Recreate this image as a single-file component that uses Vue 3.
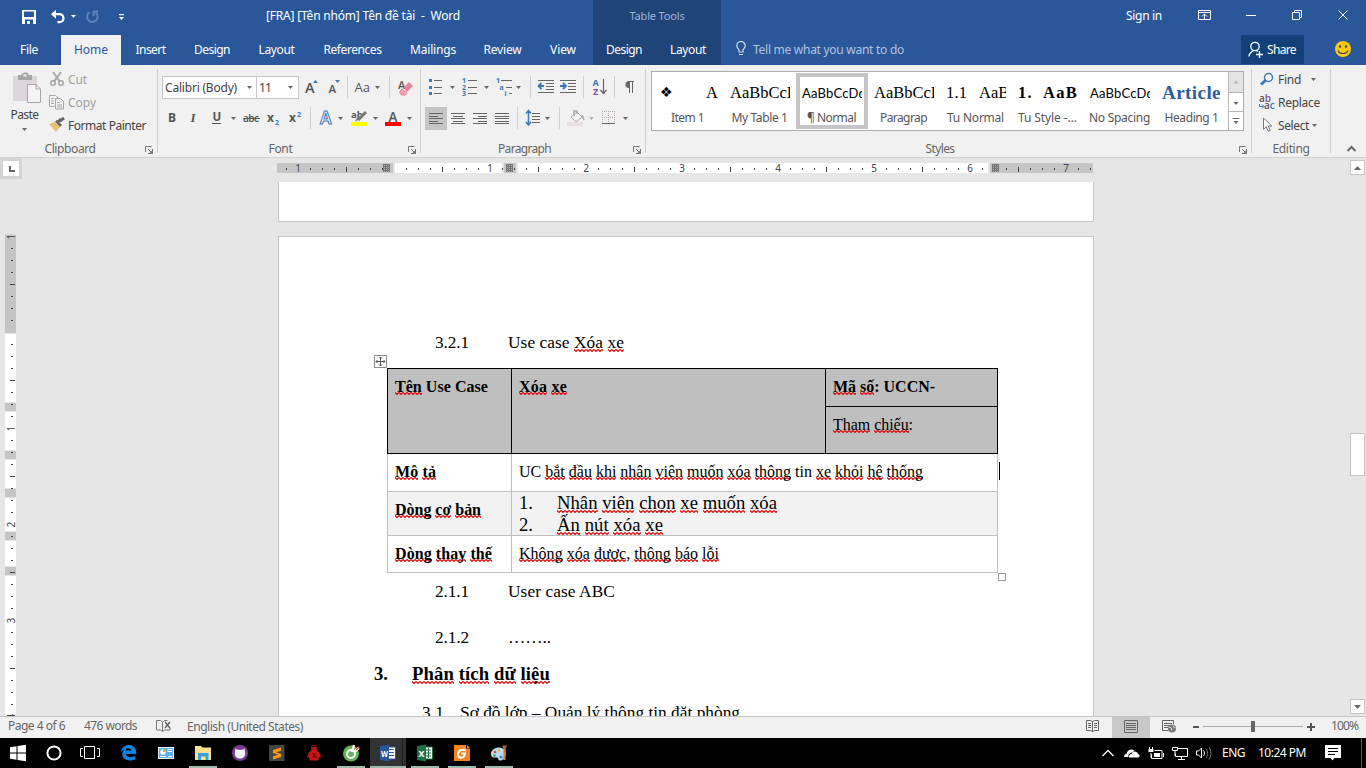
<script setup>
import { h } from 'vue'

// Icon canvas: the viewBox starts at (x, y) so neighbouring icons share one coordinate space.
const Ico = (p, { slots }) =>
  h('svg', { class: 'ico', viewBox: `${p.x} ${p.y} ${p.w} ${p.h}`, width: p.w, height: p.h }, slots.default?.())
Ico.props = ['x', 'y', 'w', 'h']

// Small drop-down arrow
const Tri = (p) => h('path', { d: `M${p.x} ${p.y}h5l-2.5 3z`, fill: p.c || '#666' })
Tri.props = ['x', 'y', 'c']

// Words prefixed with ~ get the spelling underline
const Rich = (p) =>
  p.t.split(/(~[^\s:,]+)/).filter(Boolean).map((s) => (s[0] === '~' ? h('span', { class: 'misspelt' }, s.slice(1)) : s))
Rich.props = ['t']

// Tracks a text run to the requested width
const vFit = {
  mounted(el, { value }) {
    if (!value) return
    const r = document.createRange()
    r.selectNodeContents(el)
    const n = el.textContent.length
    el.style.letterSpacing = (value - r.getBoundingClientRect().width) / n + 'px'
  },
}

const docTitle = '[FRA] [Tên nhóm] Tên đề tài  -  Word'
const tabs = [
  ['File', 58, 18, 'file'], ['Home', 60, 34, 'on'], ['Insert', 59, 30], ['Design', 64, 36], ['Layout', 65, 36],
  ['References', 87, 58], ['Mailings', 74, 46], ['Review', 65, 38], ['View', 56, 26, 'last'], ['Design', 62, 36, 'dark'], ['Layout', 66, 36, 'dark'],
]
const styles = [
  { n: 'Item 1', w: 33, k: 'serif item', p: '❖', q: 'A' },
  { n: 'My Table 1', w: 56, k: 'serif', p: 'AaBbCcD' },
  { n: '¶ Normal', w: 49, k: 'sans', p: 'AaBbCcDd', pw: 64, on: true },
  { n: 'Paragrap', w: 47, k: 'serif', p: 'AaBbCcD' },
  { n: 'Tu Normal', w: 57, k: 'serif n1', p: '1.1', pw: 21, q: 'AaB' },
  { n: 'Tu Style -...', w: 59, k: 'serif bold n2', p: '1.', pw: 15, q: 'AaB', qw: 35 },
  { n: 'No Spacing', w: 61, k: 'sans', p: 'AaBbCcDd', pw: 64 },
  { n: 'Heading 1', w: 54, k: 'serif bold blue', p: 'Article', pw: 59 },
]
const hTicks = []
for (let k = -9; k <= 58; k++) hTicks.push({ x: 394.5 + 12 * k, k, n: Math.abs(k / 8) })
const vTicks = []
for (let k = -8; k <= 32; k++) vTicks.push({ y: 332.5 + 12 * k, k, n: Math.abs(k / 8) })
const gaps = [[403, 8], [451, 8], [489, 8], [532, 8], [567, 8]]
const isNum = (k) => k !== 0 && k % 8 === 0
const isTall = (k) => ((k % 8) + 8) % 8 === 4
const hatches = [383, 506, 992]
const aligns = [
  { x: 429, r: [[0, 14], [0, 9], [0, 14], [0, 9], [0, 14]] },
  { x: 451, r: [[0, 14], [2, 10], [0, 14], [2, 10], [0, 14]] },
  { x: 473, r: [[0, 14], [5, 9], [0, 14], [5, 9], [0, 14]] },
  { x: 495, r: [[0, 14], [0, 14], [0, 14], [0, 14], [0, 14]] },
]
const alignY = [113, 116, 118, 121, 123]
</script>

<template>
  <div class="app">
    <header class="title">
      <Ico x="0" y="0" w="140" h="35">
        <path d="M22 10h14v14h-14z M24 11.5v5.5h10v-5.5z M25 19.5v4.5h2v-3h3v3h3v-4.5z" fill="#fff" fill-rule="evenodd" />
        <path d="M53 14.2h6.5a4 4 0 0 1 0 8h-2" fill="none" stroke="#fff" stroke-width="2.2" />
        <path d="M51 14.2l5-4.5v9z" fill="#fff" />
        <Tri x="71" y="15" c="#fff" />
        <path d="M89.5 12.2a5.3 5.3 0 1 0 6 .2M93 11.5h5M93.5 11v5" fill="none" stroke="#5f82ba" stroke-width="2" />
        <path d="M119 14h5v1.2h-5z" fill="#fff" /><Tri x="119" y="17" c="#fff" />
      </Ico>
      <div class="name"><span v-fit="194">{{ docTitle }}</span></div>
      <div class="ctx dark"><span v-fit="55">Table Tools</span></div>
      <div class="grow"></div>
      <div class="signin"><span v-fit="36">Sign in</span></div>
      <Ico x="1176" y="0" w="190" h="35">
        <g fill="none" stroke="#fff">
          <path d="M1198.5 10.5h12v9h-12zM1198.5 12.5h12M1204.5 19v-5M1202 16.5l2.5-2.5 2.5 2.5" />
          <path d="M1246 15.5h10" />
          <path d="M1292.5 12.5h7v7h-7zM1294.5 12v-1.5h7v7h-2" />
          <path d="M1338.500 10.500l9 9M1347.500 10.500l-9 9" />
        </g>
      </Ico>
    </header>

    <nav class="tabs">
      <div v-for="(t, i) in tabs" :key="i" class="tab" :class="t[3]" :style="{ width: t[1] + 'px' }"><span v-fit="t[2]">{{ t[0] }}</span></div>
      <Ico x="721" y="35" w="32" h="30">
        <path d="M739 52v-1.800c0-1-2.200-2.200-2.200-4.500a4.200 4.200 0 0 1 8.400 0c0 2.300-2.200 3.500-2.200 4.500V52zM739 54.500h4" fill="none" stroke="#d4deee" stroke-width="1.200" />
      </Ico>
      <span v-fit="151" class="tell">Tell me what you want to do</span>
      <div class="grow"></div>
      <div class="share">
        <Ico x="1241" y="35" w="26" h="29">
          <g fill="none" stroke="#fff" stroke-width="1.300"><circle cx="1255" cy="46.500" r="4.200" /><path d="M1249 56.500c0-4 3-4.500 4.500-6M1256 50.500l2 1M1256 54.500h7M1259.500 51v7" /></g>
        </Ico>
        <span v-fit="29">Share</span>
      </div>
      <Ico x="1304" y="35" w="62" h="30">
        <circle cx="1343" cy="49" r="8" fill="#fbc910" /><circle cx="1340" cy="46.500" r="1.200" fill="#444" /><circle cx="1346" cy="46.500" r="1.200" fill="#444" />
        <path d="M1338 50.500c1.500 4 8.500 4 10 0" fill="none" stroke="#444" stroke-width="1.200" />
      </Ico>
    </nav>

    <section class="ribbon">
      <div class="group clip">
        <div class="body">
          <div class="paste">
            <Ico x="0" y="69" w="49" h="36">
              <path d="M13 76h24v25h-24z" fill="#dcd6dc" />
              <path d="M18 75h3.500v-1.500h2v-1h4v1h1v1.500h3.500v5h-14z" fill="#a6a6a6" /><path d="M23.500 74.500h3v2h-3z" fill="#f1f1f1" />
              <path d="M27.500 84.500h8.500l4.500 4.500v13.500h-13z" fill="#f6f3f7" stroke="#a8a5a8" /><path d="M36 84.500v4.500h4.500" fill="none" stroke="#a8a5a8" />
            </Ico>
            <span v-fit="28">Paste</span>
            <Ico x="0" y="124" w="49" h="10"><Tri x="22" y="128" /></Ico>
          </div>
          <div class="cmds">
            <div class="off">
              <Ico x="49" y="69" w="19" h="23"><g fill="none" stroke="#a6a6a6" stroke-width="1.500"><path d="M53 72l6.500 9M61 72l-6.500 9" stroke-width="2" /><circle cx="53" cy="83" r="2.300" /><circle cx="61" cy="83" r="2.300" /></g></Ico>
              <span v-fit="19">Cut</span>
            </div>
            <div class="off">
              <Ico x="49" y="92" w="19" h="23"><g fill="#f5f2f5" stroke="#a8a5a8"><path d="M49.500 95.500h6l2.500 2.500v8.500h-8.500z" /><path d="M55.500 98.500h5l3 3v7.500h-8z" /><path d="M51 98.500h3M51 101h3M51 103.500h3M57 102.500h3M57 105h5M57 107h5" /></g></Ico>
              <span v-fit="28">Copy</span>
            </div>
            <div>
              <Ico x="49" y="115" w="19" h="23"><path d="M49 124l6-2 5 5-4 5z" fill="#ecbf74" /><path d="M55 121.500l2-1.500 5 5-2 2z" fill="#666" /><path d="M58 122l3-3M60 121l4-3" stroke="#666" stroke-width="3" /></Ico>
              <span v-fit="78">Format Painter</span>
            </div>
          </div>
        </div>
        <footer><span class="lab"><b v-fit="51">Clipboard</b></span><Ico class="launch" x="0" y="0" w="8" h="8"><path d="M.5 6v-5.500h6" fill="none" stroke="#777" /><path d="M3 3l3 3M7.500 3v4.500h-4.500" fill="none" stroke="#777" /><path d="M7.500 4v4h-4z" fill="#777" /></Ico></footer>
      </div>

      <div class="group font">
        <div class="body col">
          <div class="row r1">
            <div class="combo face"><span v-fit="72">Calibri (Body)</span><Ico x="0" y="0" w="6" h="4"><Tri x="0" y="0" /></Ico></div>
            <div class="combo size"><span v-fit="12">11</span><Ico x="0" y="0" w="6" h="4"><Tri x="0" y="0" /></Ico></div>
            <Ico x="299" y="75" w="48" h="25">
              <text x="305" y="93" font-size="14.500" class="ib">A</text><path d="M313 83h5l-2.500-3z" fill="#3e78b5" />
              <text x="328.500" y="93" font-size="11.500" class="ib">A</text><path d="M335 80h5l-2.500 3z" fill="#3e78b5" />
            </Ico>
            <Ico x="347" y="75" w="42" h="25"><path d="M347.500 76v22" class="sep" /><text x="354.500" y="92" font-size="13" class="ib thin">Aa</text><Tri x="375" y="86" /></Ico>
            <Ico x="389" y="75" w="30" h="25">
              <path d="M389.500 76v22" class="sep" /><text x="398" y="89" font-size="11" class="ib">A</text>
              <path d="M404 87l5-5 4 4-6.500 6.500z" fill="#e8849a" /><path d="M402 88.500l5 5-2 1.500h-3.500l-2-2.500z" fill="#f0a0b0" stroke="#e8849a" />
            </Ico>
          </div>
          <div class="row r2">
            <Ico x="162" y="105" w="22" h="25"><text x="168" y="122" font-size="12" class="ib bb">B</text></Ico>
            <Ico x="184" y="105" w="22" h="25"><text x="190.500" y="122" font-size="13" class="it">I</text></Ico>
            <Ico x="206" y="105" w="34" h="25"><text x="212.500" y="121" font-size="11.500" class="ib bb">U</text><path d="M212 123.500h9" stroke="#555" /><Tri x="231" y="117" /></Ico>
            <Ico x="240" y="105" w="23" h="25"><text x="243" y="122" font-size="10" textLength="16" class="ib">abc</text><path d="M243 118.500h17" stroke="#555" /></Ico>
            <Ico x="263" y="105" w="23" h="25"><text x="267" y="122" font-size="12" class="ib bb">x</text><text x="275" y="125" font-size="7" class="bl">2</text></Ico>
            <Ico x="286" y="105" w="24" h="25"><text x="289" y="122" font-size="12" class="ib bb">x</text><text x="297" y="117" font-size="7" class="bl">2</text></Ico>
            <Ico x="310" y="105" w="38" h="25"><path d="M310.500 107v22" class="sep" /><text x="320" y="124" font-size="17" class="glow">A</text><Tri x="338" y="117" /></Ico>
            <Ico x="348" y="105" w="34" h="25"><text x="351" y="118" font-size="9.500" class="ib bb">ab</text><path d="M366 112l-8 8" stroke="#777" stroke-width="3" /><path d="M355 121.500l2-4 2.500 2z" fill="#777" /><path d="M351 122h16v4h-16z" fill="#ff0" /><Tri x="373" y="117" /></Ico>
            <Ico x="382" y="105" w="37" h="25"><text x="388.500" y="121.500" font-size="13.500" class="ib">A</text><path d="M385 122h16v4h-16z" fill="#f00" /><Tri x="407" y="117" /></Ico>
          </div>
        </div>
        <footer><span class="lab"><b v-fit="24">Font</b></span><Ico class="launch" x="0" y="0" w="8" h="8"><path d="M.5 6v-5.500h6" fill="none" stroke="#777" /><path d="M3 3l3 3M7.500 3v4.500h-4.500" fill="none" stroke="#777" /><path d="M7.500 4v4h-4z" fill="#777" /></Ico></footer>
      </div>

      <div class="group para">
        <div class="body col">
          <div class="row r1">
            <Ico x="421" y="75" w="39" h="25"><path d="M429 79h3v3h-3zM429 86h3v3h-3zM429 92h3v3h-3z" fill="#3e78b5" /><path d="M434 80.500h8M434 87.500h8M434 93.500h8" class="ln" /><Tri x="450" y="86" /></Ico>
            <Ico x="460" y="75" w="34" h="25"><text x="462" y="83" class="num">1</text><text x="462" y="89.500" class="num">2</text><text x="462" y="96" class="num">3</text><path d="M468 80.500h9M468 87.500h9M468 93.500h9" class="ln" /><Tri x="484" y="86" /></Ico>
            <Ico x="494" y="75" w="36" h="25"><text x="496" y="83" class="num">1</text><text x="499.500" y="90" class="num">a</text><text x="504.500" y="95.500" class="num">i</text><path d="M501 80.500h11M506 87.500h6M509 93.500h3" class="ln" /><Tri x="516" y="86" /></Ico>
            <Ico x="530" y="75" w="27" h="25"><path d="M530.500 76v22" class="sep" /><path d="M538 80.500h16M546 83.500h8M546 86.500h8M546 89.500h8M538 92.500h16" class="ln" /><path d="M539 86h5M541.500 83l-3 3 3 3" fill="none" stroke="#3e78b5" stroke-width="1.800" /></Ico>
            <Ico x="557" y="75" w="26" h="25"><path d="M560 80.500h16M568 83.500h8M568 86.500h8M568 89.500h8M560 92.500h16" class="ln" /><path d="M560 86h5M563 83l3 3-3 3" fill="none" stroke="#3e78b5" stroke-width="1.800" /></Ico>
            <Ico x="583" y="75" w="31" h="25"><path d="M583.500 76v22" class="sep" /><text x="592.500" y="86" font-size="9" class="bl">A</text><text x="593" y="94.500" font-size="9" class="pu">Z</text><path d="M603.500 79v14M600.500 90l3 3.500 3-3.500" fill="none" stroke="#666" stroke-width="1.200" /></Ico>
            <Ico x="614" y="75" w="28" h="25"><path d="M614.500 76v22" class="sep" /><path d="M634 81.500h-6M629.500 81v12M632.500 81v12" class="ln" /><path d="M629 81a3.500 3.500 0 0 0 0 7z" fill="#666" /></Ico>
          </div>
          <div class="row r2">
            <Ico x="421" y="105" w="95" h="25">
              <path d="M425 107h22v23h-22z" fill="#c5c5c5" />
              <template v-for="a in aligns" :key="a.x"><path v-for="(l, i) in a.r" :key="i" :d="`M${a.x + l[0]} ${alignY[i] + 0.5}h${l[1]}`" class="ln" /></template>
            </Ico>
            <Ico x="516" y="105" w="42" h="25"><path d="M517.500 107v22" class="sep" /><path d="M528.500 111v13M526 113.500l2.500-3 2.500 3M526 122l2.500 3 2.500-3" fill="none" stroke="#3e78b5" stroke-width="1.500" /><path d="M532 113.500h8M532 116.500h8M532 119.500h8M532 122.500h8" class="ln" /><Tri x="545" y="117" /></Ico>
            <Ico x="558" y="105" w="40" h="25"><path d="M559.500 107v22" class="sep" /><path d="M571 117l6-5 5 5-6 5z" fill="#f6f3f6" stroke="#aaa" /><path d="M574 116v-5h3v3M582 115l2 5" fill="none" stroke="#aaa" stroke-width="1.500" /><path d="M567 122h16v4h-16z" fill="#e7dfe5" /><Tri x="589" y="117" c="#b5b5b5" /></Ico>
            <Ico x="598" y="105" w="44" h="25"><g stroke="#b3a6b3" stroke-dasharray="1 1" fill="none"><path d="M602 111.500h13M602 117.500h13M602.500 111v12M608.500 111v12M614.500 111v12" /></g><path d="M602 123.500h13" stroke="#666" /><Tri x="623" y="117" /></Ico>
          </div>
        </div>
        <footer><span class="lab"><b v-fit="53">Paragraph</b></span><Ico class="launch" x="0" y="0" w="8" h="8"><path d="M.5 6v-5.500h6" fill="none" stroke="#777" /><path d="M3 3l3 3M7.500 3v4.500h-4.500" fill="none" stroke="#777" /><path d="M7.500 4v4h-4z" fill="#777" /></Ico></footer>
      </div>

      <div class="group sty">
        <div class="body">
          <div class="gallery">
            <div v-for="s in styles" :key="s.n" class="style" :class="{ on: s.on }">
              <div class="prev" :class="s.k"><span v-fit="s.pw" class="p">{{ s.p }}</span><span v-if="s.q" v-fit="s.qw" class="q">{{ s.q }}</span></div>
              <span v-fit="s.w" class="sn">{{ s.n }}</span>
            </div>
            <div class="gscroll">
              <Ico x="0" y="0" w="14" h="21"><path d="M0 0h14v20h-14z" fill="#e4e4e4" /><path d="M0 20.500h14" stroke="#b5b5b5" /><path d="M4.500 11.500h5l-2.500-3z" fill="#b5b5b5" /></Ico>
              <Ico x="0" y="0" w="14" h="19"><path d="M0 18.500h14" stroke="#b5b5b5" /><Tri x="4.500" y="9" /></Ico>
              <Ico x="0" y="0" w="14" h="18"><path d="M3.500 6.500h7" stroke="#666" /><Tri x="4.500" y="9" /></Ico>
            </div>
          </div>
        </div>
        <footer><span class="lab"><b v-fit="29">Styles</b></span><Ico class="launch" x="0" y="0" w="8" h="8"><path d="M.5 6v-5.500h6" fill="none" stroke="#777" /><path d="M3 3l3 3M7.500 3v4.500h-4.500" fill="none" stroke="#777" /><path d="M7.500 4v4h-4z" fill="#777" /></Ico></footer>
      </div>

      <div class="group edit">
        <div class="body">
          <div class="cmds">
            <div><Ico x="1252" y="69" w="26" h="23"><path d="M1266 80l-5 4.500" stroke="#3e78b5" stroke-width="3" /><circle cx="1268.500" cy="77.500" r="4" fill="#fff" stroke="#3e78b5" stroke-width="1.500" /></Ico><span v-fit="23">Find</span><Ico x="1301" y="69" w="20" h="23"><Tri x="1311" y="78" /></Ico></div>
            <div><Ico x="1252" y="92" w="26" h="23"><text x="1259" y="102" font-size="10" class="ib">a<tspan fill="#8347a3">b</tspan></text><text x="1264" y="109" font-size="10" class="ib">a<tspan fill="#3e78b5">c</tspan></text><path d="M1259.500 104v2.500h4M1262 104.500l2 2-2 2" fill="none" stroke="#3e78b5" /></Ico><span v-fit="42">Replace</span></div>
            <div><Ico x="1252" y="115" w="26" h="23"><path d="M1263.500 118v11.500l2.800-2.700 2 4.500 2-1-2-4.300h3.500z" fill="#fff" stroke="#777" /></Ico><span v-fit="31">Select</span><Ico x="1309" y="115" w="12" h="23"><Tri x="1312" y="124" /></Ico></div>
          </div>
        </div>
        <footer><span class="lab"><b v-fit="37">Editing</b></span></footer>
      </div>
      <Ico x="1331" y="65" w="35" h="92"><path d="M1347.500 151l4-4 4 4" fill="none" stroke="#666" stroke-width="2" /></Ico>
    </section>

    <main class="work">
      <aside class="vr">
        <Ico x="0" y="158" w="24" h="558">
          <path d="M0 158h22v21h-22z" fill="#d4d4d4" /><path d="M3 161h16v15h-16z" fill="#fff" /><path d="M9 166h2v4h4v2h-6z" fill="#666" />
          <path d="M5 234.500h11v98.500h-11z" fill="#c5c5c5" /><path d="M5 334h11v382h-11z" fill="#fff" />
          <g v-for="g in gaps" :key="g[0]"><path :d="`M5 ${g[0] - 1}h11v${g[1] + 2}h-11z`" fill="#e6e6e6" /><path :d="`M5 ${g[0]}h11v${g[1]}h-11z`" fill="#c5c5c5" /></g>
          <template v-for="t in vTicks" :key="t.k">
            <text v-if="isNum(t.k)" :transform="`translate(15 ${t.y + 3}) rotate(-90)`" class="rn">{{ t.n }}</text>
            <path v-else-if="t.k !== 0" :d="isTall(t.k) ? `M10 ${t.y}h5` : `M11 ${t.y}h2`" stroke="#444" />
          </template>
        </Ico>
      </aside>
      <div class="canvas">
        <Ico x="277" y="158" w="817" h="24">
          <path d="M277 163h116v10h-116zM504 163h12v10h-12zM990 163h103v10h-103z" fill="#c5c5c5" /><path d="M395 163h107v10h-107zM518 163h470v10h-470z" fill="#fff" />
          <template v-for="t in hTicks" :key="t.k">
            <text v-if="isNum(t.k)" :x="t.x - 0.500" y="172" text-anchor="middle" class="rn">{{ t.n }}</text>
            <path v-else-if="t.k !== 0" :d="isTall(t.k) ? `M${t.x} 167v5` : `M${t.x} 168v2`" stroke="#444" />
          </template>
          <g v-for="x in hatches" :key="x"><path :d="`M${x} 164h7v8h-7z`" fill="#aaa" /><path :d="`M${x} 164.500h7m-7 2h7m-7 2h7m-7 2h7M${x + 0.500} 164v8m2-8v8m2-8v8m2-8v8`" stroke="#777" /></g>
        </Ico>
        <div class="page first"></div>
        <div class="page second">
          <div class="ln1 h1"><span v-fit="34" class="no">3.2.1</span><span v-fit="116"><Rich t="Use case ~Xóa ~xe" /></span></div>
          <div class="tbl">
            <svg class="handle" viewBox="0 0 13 13" width="13" height="13"><path d="M.5 .5h12v12h-12z" fill="#fff" stroke="#8a8a8a" /><path d="M6.500 2v9M2 6.500h9M5 3.500l1.500-1.500 1.500 1.500M5 9.500l1.500 1.500 1.500-1.500M3.500 5l-1.500 1.500 1.500 1.500M9.500 5l1.500 1.500-1.500 1.500" fill="none" stroke="#555" /></svg>
            <div class="thead">
              <div class="c a"><span v-fit="93"><Rich t="~Tên Use Case" /></span></div>
              <div class="c a"><span v-fit="48"><Rich t="~Xóa ~xe" /></span></div>
              <div class="c"><span v-fit="102"><Rich t="~Mã ~số: UCCN-" /></span></div>
              <div class="c light"><span v-fit="80"><Rich t="~Tham ~chiếu:" /></span></div>
            </div>
            <div class="tr t1"><div class="c"><b v-fit="41"><Rich t="~Mô ~tả" /></b></div><div class="c"><span v-fit="404"><Rich t="UC ~bắt ~đầu ~khi ~nhân ~viên ~muốn ~xóa ~thông tin ~xe ~khỏi ~hệ ~thống" /></span></div><i class="caret"></i></div>
            <div class="tr t2"><div class="c"><b v-fit="86"><Rich t="~Dòng ~cơ ~bản" /></b></div>
              <div class="c list">
                <div><span class="ord">1.</span><span v-fit="220"><Rich t="~Nhân ~viên ~chọn ~xe ~muốn ~xóa" /></span></div>
                <div><span class="ord">2.</span><span v-fit="106"><Rich t="~Ấn ~nút ~xóa ~xe" /></span></div>
              </div></div>
            <div class="tr t3"><div class="c"><b v-fit="97"><Rich t="~Dòng ~thay ~thế" /></b></div><div class="c"><span v-fit="200"><Rich t="~Không ~xóa ~được, ~thông ~báo ~lỗi" /></span></div></div>
            <i class="grip"></i>
          </div>
          <div class="ln1 h2"><span v-fit="34" class="no">2.1.1</span><span v-fit="107">User case ABC</span></div>
          <div class="ln1 h3"><span v-fit="34" class="no">2.1.2</span><span v-fit="43">……..</span></div>
          <div class="ln1 h4"><span v-fit="14" class="no">3.</span><span v-fit="138"><Rich t="~Phân ~tích ~dữ ~liệu" /></span></div>
          <div class="ln1 h5"><span v-fit="22" class="no">3.1</span><span v-fit="280">Sơ đồ lớp – Quản lý thông tin đặt phòng</span></div>
        </div>
      </div>
      <Ico class="vs" x="1342" y="158" w="24" h="558">
        <g fill="#fff" stroke="#c5c5c5"><path d="M1350.500 160.500h14v14h-14zM1350.500 433.500h14v42h-14zM1350.500 699.500h14v14h-14z" /></g>
        <path d="M1354 170h7l-3.500-4zM1354 705h7l-3.500 4z" fill="#666" />
      </Ico>
    </main>

    <div class="status">
      <span v-fit="57" class="s1">Page 4 of 6</span><span v-fit="53" class="s2">476 words</span>
      <Ico x="137" y="717" w="50" h="21"><path d="M156.500 720.500h4l2 1.500v9.500l-2-1.500h-4zM162.500 722l2-1.500h3" fill="none" stroke="#777" /><path d="M162.500 731.500l2-1.500h5.500v-2" fill="none" stroke="#777" /><path d="M165 722l5 6M170 722l-5 6" stroke="#666" stroke-width="1.500" /></Ico>
      <span v-fit="116" class="s3">English (United States)</span>
      <div class="grow"></div>
      <Ico x="1080" y="717" w="251" h="21">
        <path d="M1112 717h38v21h-38z" fill="#c8c8c8" />
        <g fill="none" stroke="#666">
          <path d="M1086.500 720.500h4l2 1 2-1h4v10h-4l-2 1-2-1h-4zM1092.500 721v11M1088 723.500h3M1088 725.500h3M1088 727.500h3M1094 723.500h3M1094 725.500h3M1094 727.500h3" />
          <path d="M1124.500 720.500h13v12h-13zM1126 723.500h10M1126 725.500h10M1126 727.500h10M1126 729.500h10" />
          <path d="M1173.500 724v-3.500h-11v10h6M1164 723.500h8M1164 725.500h5M1164 727.500h4" />
        </g>
        <circle cx="1172" cy="728.500" r="4" fill="#777" /><path d="M1169 727l2.500 1 0 2.500M1173 725.500l1 2 1.500.5" stroke="#ddd" fill="none" />
        <path d="M1193 726h6v2h-6zM1307 726h8v2h-8zM1310 723h2v8h-2z" fill="#555" /><path d="M1203 726.500h100" stroke="#aaa" /><path d="M1251 721h4v11h-4z" fill="#666" />
      </Ico>
      <span v-fit="27" class="s4">100%</span>
    </div>

    <div class="task">
      <Ico x="0" y="738" w="36" h="30"><path d="M10 747.300l6.500-1v6.200h-6.500zM17.500 746.100l8.500-1.300v7.700h-8.500zM10 753.500h6.500v6.200l-6.500-1zM17.500 753.500h8.500v7.700l-8.500-1.300z" fill="#fff" /></Ico>
      <Ico x="36" y="738" w="36" h="30"><circle cx="54" cy="753" r="6.600" fill="none" stroke="#fff" stroke-width="2" /></Ico>
      <Ico x="72" y="738" w="37" h="30"><path d="M84.500 746.500h10v12h-10zM83 748.500h-2.500v8h2.500M97 748.500h2.500v8h-2.500" fill="none" stroke="#fff" /></Ico>
      <Ico x="109" y="738" w="37" h="30"><path d="M121 752c1-5 4-7 8-7 5 0 7.500 3.500 7.300 9h-10.300c.3 3.500 5.500 4 9.300 2v3.300c-6 2.700-13 .7-13-5 0-3 1.500-5 4.500-6.300-.7.800-1 1.800-1 2.600h5.700c0-3-5.500-4-10.500 1.400z" fill="#0a84e0" /></Ico>
      <Ico x="146" y="738" w="37" h="30"><path d="M158 747h16v12h-16z" fill="#e8f3fa" /><path d="M159 748h14v10h-14z" fill="#56b4e8" /><circle cx="163" cy="752" r="2.700" fill="#fff" /><path d="M163 752v-2.700a2.700 2.700 0 0 1 2.700 2.700z" fill="#f0a020" /><path d="M167.500 749.500h4.500M167.500 751.500h4.500M160 756.500h6M168 756.500h4" stroke="#fff" /></Ico>
      <Ico x="183" y="738" w="37" h="30"><path d="M195 746h6l1.500 1.500h8.500v12.500h-16z" fill="#fbe28a" /><path d="M198 753h10.500v7h-3v-3.500h-4.500v3.500h-3z" fill="#38a3e0" /><path d="M189 766h28v2h-28z" class="run" /></Ico>
      <Ico x="220" y="738" w="37" h="30"><circle cx="240" cy="753" r="8" fill="#7a3d91" /><path d="M235.500 748.500l2 1.300h5l2-1.300.5 3.500c1 4-1.500 6.500-5 6.500s-6-2.500-5-6.500z" fill="#f4f4f4" /></Ico>
      <Ico x="257" y="738" w="38" h="30"><path d="M269 745h15.500v16h-15.500z" fill="#454545" /><path d="M281 747.500v3.200l-5 1.600 5 1.700v3l-8 2.500v-3l5-1.700-5-1.700v-3z" fill="#ff9800" /></Ico>
      <Ico x="295" y="738" w="37" h="30"><circle cx="314" cy="748" r="3" fill="#b01515" /><path d="M311.500 746.500h5" stroke="#111" /><path d="M311 750h6l2.500 6-1.500 4.500h-8l-1.500-4.500z" fill="#c81616" /><path d="M310 752l-2.500 5.500M318 752l2.500 5.500" stroke="#c81616" stroke-width="1.500" /><path d="M312 754h2v3h-2M315.500 753.500v4h2" stroke="#701010" fill="none" stroke-width="1.200" /></Ico>
      <Ico x="332" y="738" w="38" h="30"><circle cx="351" cy="753.500" r="8" fill="#62b45c" /><path d="M352 752l2-7M354 752l5-4" stroke="#fff" stroke-width="2.500" /><path d="M351 747.500l1-2M356 750l3-3" stroke="#f06030" stroke-width="1.500" /><circle cx="351" cy="754" r="4" fill="none" stroke="#fff" stroke-width="2" /><path d="M337 766h28v2h-28z" class="run" /></Ico>
      <Ico x="370" y="738" w="36" h="30"><path d="M370 738h36v30h-36z" fill="#333" /><path d="M402.500 738v30" stroke="#1d1d1d" /><path d="M386 747h9.500v12h-9.500z" fill="#fff" stroke="#2a579a" /><path d="M389 749.500h5M389 752.500h5M389 755.500h5" stroke="#2a579a" /><path d="M380 746l9-1.500v17l-9-1.500z" fill="#2a579a" /><text x="381" y="756.500" font-size="8" textLength="7" lengthAdjust="spacingAndGlyphs" class="wt">W</text><path d="M370 766h36v2h-36z" class="run" /></Ico>
      <Ico x="406" y="738" w="37" h="30"><path d="M424 747h8.500v12h-8.500z" fill="#fff" stroke="#1e7145" /><path d="M426 750h5M426 753h5M426 756h5M428.500 748v10" stroke="#1e7145" /><path d="M417 746l9-1.500v17l-9-1.500z" fill="#1e7145" /><text x="418.500" y="756.500" font-size="9" class="wt">X</text><path d="M411 766h28v2h-28z" class="run" /></Ico>
      <Ico x="443" y="738" w="37" h="30"><path d="M454 745h12v3.500h4v12.500h-16z" fill="#f58220" /><path d="M467 745l3 3h-3z" fill="#f58220" /><path d="M466 750.500c-5-2-8.500 1-8 4.500 1 4 6.500 3.500 7-1.500h-4" fill="none" stroke="#fff" stroke-width="2" /><path d="M448 766h28v2h-28z" class="run" /></Ico>
      <Ico x="480" y="738" w="37" h="30"><path d="M491 754c0-4 4-6.500 8-6.500s7 3 6.500 7c-.5 4-3 6-5.500 6s-1-3-3-3-6 1-6-3.500z" fill="#b8dcf0" /><circle cx="495" cy="752" r="1.300" fill="#e04030" /><circle cx="499" cy="750.500" r="1.300" fill="#f0b020" /><circle cx="501" cy="757" r="1.500" fill="#3a80d0" /><circle cx="494.500" cy="755.500" r="1.200" fill="#40a040" /><path d="M504.500 748v12" stroke="#e08020" stroke-width="2.200" /><path d="M502 745.500h5l-1.500 3.500h-2z" fill="#a06a40" /><path d="M485 766h28v2h-28z" class="run" /></Ico>
      <div class="grow"></div>
      <Ico x="1096" y="738" w="126" h="30">
        <path d="M1102.500 756l5.500-5.500 5.500 5.500" fill="none" stroke="#fff" stroke-width="1.300" />
        <path d="M1124 757c0-2 1-3 2.500-3 .5-4 5-6 8-3l-3 1.500c-3 1-3.500 3-3 4.500z" fill="#fff" /><path d="M1129 757.500c-.5-2 1-3.500 2.500-3.500 1-3.500 6-3 6.500 0 2 .3 2.500 3.500 0 3.500z" fill="#fff" />
        <g fill="none" stroke="#fff"><path d="M1154.500 750.500h7.500v8h-10.500v-4M1163.500 753v4M1149.500 747v3M1152.500 747v3M1151 753v5" /><path d="M1154 753h6v4h-6zM1148.500 749h5v3h-5z" fill="#fff" stroke="none" /><path d="M1178 748.500h9.500v8h-12v-3M1181.500 757v2M1178 759.500h7M1172.500 747.500h5v3h-5zM1175 751v5" /><path d="M1196.500 751h2l3-3v10l-3-3h-2zM1203.500 750.500c1.200 1.500 1.200 4 0 5.500" /><path d="M1206 748.500c2 2.500 2 7 0 9.500M1209 747c2.500 4 2.500 8.500 0 12.500" stroke="#777" /></g>
      </Ico>
      <span v-fit="23" class="tk eng">ENG</span><span v-fit="48" class="tk clock">10:24 PM</span>
      <Ico x="1306" y="738" w="60" h="30"><path d="M1325 745h16v13h-6.500l-2 2.500-2-2.500h-5.500z" fill="#fff" /><path d="M1328 748.500h10M1328 751.500h10M1328 754.500h7" stroke="#000" /><path d="M1361.500 738v30" stroke="#555" /></Ico>
    </div>
  </div>
</template>

<style>
body { margin: 0; overflow: hidden; }
.misspelt { background: url("data:image/svg+xml,%3Csvg xmlns='http://www.w3.org/2000/svg' width='4' height='3'%3E%3Cpath d='M0 .5L2 2.5L4 .5' fill='none' stroke='%23e00000' stroke-width='1.1'/%3E%3C/svg%3E") repeat-x left bottom; }
</style>

<style scoped>
.app { width: 1366px; height: 768px; display: flex; flex-direction: column; overflow: hidden; background: #e6e6e6; font: 12px/16px "Noto Sans", "Open Sans", sans-serif; color: #444; }
.app > * { flex: none; }
.app span, .app b { white-space: pre; }
.ico { display: block; flex: none; }
.grow { flex: 1; }
.dark { background: #214478; }
.title { display: flex; height: 35px; background: #2a579a; color: #fff; line-height: 32px; }
.name { width: 446px; padding-right: 7px; text-align: center; }
.ctx { width: 128px; text-align: center; color: #a0b4d3; font-size: 11px; }
.signin { width: 50px; }
.tabs { display: flex; height: 30px; background: #2a579a; color: #fff; line-height: 29px; }
.tab { text-align: center; flex: none; }
.tab.file { margin-right: 3px; }
.tab.last { margin-right: 2px; }
.tab.on { background: #f1f1f1; color: #2a579a; }
.tab.dark { background: #214478; }
.tab.dark + .tab.dark { width: 66px; }
.tell { color: #b1c3df; }
.share { display: flex; width: 63px; height: 29px; background: #124078; }
.ribbon { display: flex; height: 92px; background: #f1f1f1; border-bottom: 1px solid #d2d2d2; }
.group { box-sizing: border-box; height: 84px; margin-top: 4px; border-right: 1px solid #d0d0d0; display: flex; flex-direction: column; }
.clip { width: 158px; } .font { width: 263px; } .para { width: 225px; } .sty { width: 606px; } .edit { width: 79px; }
.body { display: flex; height: 71px; }
.body.col { flex-direction: column; }
.group footer { display: flex; height: 13px; line-height: 18px; color: #666; }
.group footer b { font-weight: 400; }
.lab { flex: 1; padding-right: 5px; text-align: center; }
.edit .lab { padding-right: 0; }
.launch { margin: 6px 4px 0 0; }
.paste { width: 49px; text-align: center; line-height: 19px; }
.paste span { display: block; height: 19px; }
.cmds > div { display: flex; height: 23px; line-height: 22px; }
.off { color: #a0a0a0; }
.row { display: flex; height: 25px; }
.r1 { margin-top: 6px; }
.r2 { margin-top: 5px; }
.font .row { padding-left: 4px; }
.combo { box-sizing: border-box; height: 23px; margin-top: 1px; border: 1px solid #c6c6c6; background: #fff; display: flex; align-items: center; justify-content: space-between; padding: 0 3px 0 2px; line-height: 21px; }
.face { width: 95px; }
.size { width: 43px; margin-left: -1px; padding-right: 4px; }
.sep { stroke: #d0d0d0; }
.ln { stroke: #666; fill: none; }
.ib { fill: #555; font-weight: 600; font-family: "Open Sans", sans-serif; }
.bb { font-weight: 700; }
.thin { font-weight: 400; }
.it { fill: #555; font: italic bold 13px "Liberation Serif", serif; }
.bl { fill: #3e78b5; font-weight: 700; }
.pu { fill: #8347a3; font-weight: 700; }
.num { fill: #3e78b5; font-weight: 700; font-size: 7px; }
.wt { fill: #fff; font-weight: 700; }
.glow { fill: #fff; stroke: #3e78b5; stroke-width: 1; font-weight: 600; }
.gallery { box-sizing: border-box; display: flex; width: 593px; height: 60px; margin: 2px 0 0 5px; border: 1px solid #ababab; background: #fff; }
.style { box-sizing: border-box; width: 72px; height: 56px; margin-top: 1px; text-align: center; border: 4px solid transparent; line-height: 16px; flex: none; }
.style.on { border-color: #c5c5c5; }
.prev { display: flex; width: 60px; height: 24px; margin: 6px 0 0 2px; overflow: hidden; color: #000; line-height: 20px; text-align: left; }
.serif { font-family: "Liberation Serif", serif; font-size: 16.5px; }
.sans { font-family: Lato, "Open Sans", sans-serif; font-size: 13px; line-height: 21px; }
.item { box-sizing: border-box; padding-left: 2px; }
.item .p { width: 46px; font-family: "DejaVu Sans", sans-serif; font-size: 14px; line-height: 19px; }
.n1 .p { width: 33px; }
.n2 .p { width: 25px; }
.p, .q { flex: none; }
.bold { font-weight: 700; }
.blue { color: #2e5f97; font-size: 19px; }
.sn { display: block; margin: 3px -8px 0 -9px; color: #555; }
.gscroll { width: 14px; margin-left: auto; border-left: 1px solid #b5b5b5; }
.work { height: 558px; display: flex; overflow: hidden; border-bottom: 1px solid #c5c5c5; }
.vr { width: 277px; }
.canvas { width: 817px; flex: none; }
.vs { margin-left: auto; }
.rn { font-size: 10px; fill: #444; }
.page { box-sizing: border-box; margin-left: 1px; width: 816px; background: #fff; border: 1px solid #c5c5c5; }
.first { height: 40px; border-top: 0; }
.second { margin-top: 14px; height: 600px; color: #000; font-family: "Liberation Serif", serif; }
.ln1 { display: flex; height: 20px; font-size: 17.33px; line-height: 20px; }
.no { flex: none; }
.h1 { margin: 96px 0 0 156px; }
.h1 .no, .h2 .no, .h3 .no { width: 73px; }
.h2 { margin: 9px 0 0 156px; }
.h3 { margin: 26px 0 0 156px; }
.h4 { margin: 16px 0 0 95px; font-size: 18.67px; font-weight: 700; }
.h4 .no { width: 38px; }
.h5 { margin: 19px 0 0 143px; }
.h5 .no { width: 38px; }
.tbl { position: relative; width: 611px; margin: 15px 0 0 108px; font-size: 16px; line-height: 20px; }
.handle { position: absolute; left: -13px; top: -13px; }
.thead { display: grid; grid-template: 38px 47px / 124px 314px 172px; border: solid #000; border-width: 0 1px 1px 0; background: #bfbfbf; font-weight: 700; }
.c { box-sizing: border-box; padding: 8px 0 0 7px; border: solid #000; border-width: 1px 0 0 1px; }
.a { grid-row: span 2; }
.thead .c:nth-child(4) { grid-column: 3; }
.light { font-weight: 400; }
.tr { position: relative; display: grid; grid-template-columns: 124px 1fr; border-right: 1px solid #bfbfbf; }
.tr .c { border-color: #bfbfbf; }
.t1 { height: 37px; }
.t1 .c { border-top: 0; }
.t2 { height: 44px; background: #f2f2f2; }
.t3 { height: 37px; border-bottom: 1px solid #bfbfbf; }
.list { padding-top: 0; font-size: 18.67px; line-height: 22px; }
.list div { display: flex; height: 22px; }
.ord { width: 38px; }
.caret { position: absolute; left: 612px; top: 8px; width: 1px; height: 18px; background: #000; }
.grip { position: absolute; right: -8px; bottom: -8px; width: 6px; height: 6px; border: 1px solid #999; background: #fff; }
.status { display: flex; height: 21px; background: #f1f1f1; color: #666; line-height: 18px; }
.s1 { width: 76px; padding-left: 8px; } .s2 { width: 53px; } .s3 { line-height: 20px; } .s4 { width: 35px; }
.task { display: flex; height: 30px; background: #000; color: #fff; line-height: 29px; }
.eng { width: 36px; } .clock { width: 48px; }
.run { fill: #9dbbaa; }
</style>
